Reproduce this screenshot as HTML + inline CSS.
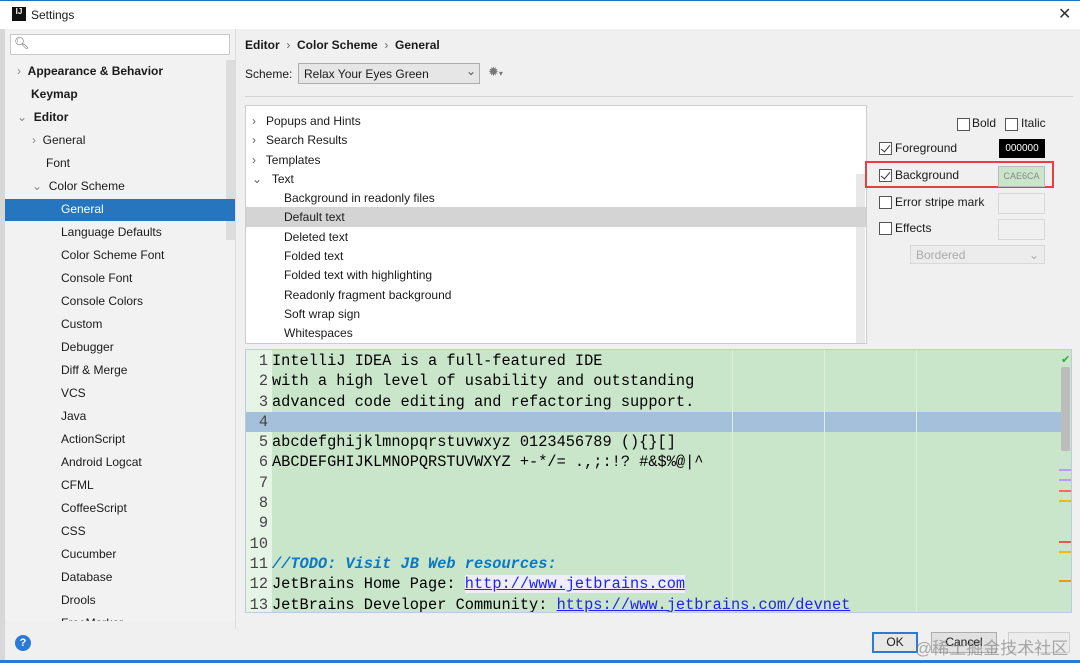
<!DOCTYPE html><html><head><style>
body{margin:0;width:1080px;height:663px;overflow:hidden;background:#f0f0f0;font-family:"Liberation Sans",sans-serif;font-size:12px;color:#1a1a1a;position:relative}
.a{position:absolute;white-space:nowrap}
.mono{font-family:"Liberation Mono",monospace;font-size:15.3px;color:#000}
.n{display:inline-block;width:23px;padding-right:4px;text-align:right;color:#444}
.cb{position:absolute;width:11px;height:11px;border:1px solid #555;background:#fff}
.chk::after{content:"";position:absolute;left:3px;top:0px;width:4px;height:8px;border:solid #333;border-width:0 1.5px 1.5px 0;transform:rotate(40deg)}
</style></head><body>
<div class="a" style="left:0;top:0;width:1080px;height:29px;background:#fff"></div>
<div class="a" style="left:0;top:0;width:1080px;height:1px;background:#1a73c8"></div>
<div class="a" style="left:12px;top:7px;width:14px;height:14px;background:#111;color:#fff;font-size:8px;font-weight:bold;line-height:10px;text-align:center">IJ</div>
<div class="a" style="left:31px;top:8px;font-size:12px">Settings</div>
<div class="a" style="left:1058px;top:4px;font-size:16px;color:#333">✕</div>
<div class="a" style="left:0;top:29px;width:5px;height:634px;background:#d8d8d8"></div>
<div class="a" style="left:5px;top:29px;width:230px;height:600px;background:#f2f2f2"></div>
<div class="a" style="left:235px;top:29px;width:1px;height:600px;background:#dcdcdc"></div>
<div class="a" style="left:10px;top:34px;width:218px;height:19px;background:#fff;border:1px solid #c8c8c8"></div>
<div class="a" style="left:14px;top:36px;font-size:12px;color:#666">🔍︎</div>
<div class="a" style="left:226px;top:60px;width:9px;height:180px;background:#ddd"></div>
<div class="a" style="left:5px;top:199px;width:230px;height:22px;background:#2675bf"></div>
<div class="a" style="left:17px;top:60px;line-height:23px">
<div style="height:23px"><span style="color:#888">›</span>&nbsp; <b>Appearance &amp; Behavior</b></div>
<div style="height:23px;padding-left:14px"><b>Keymap</b></div>
<div style="height:23px"><span style="color:#888">⌄</span>&nbsp; <b>Editor</b></div>
<div style="height:23px;padding-left:15px"><span style="color:#888">›</span>&nbsp; General</div>
<div style="height:23px;padding-left:29px">Font</div>
<div style="height:23px;padding-left:15px"><span style="color:#888">⌄</span>&nbsp; Color Scheme</div>
<div style="height:23px;padding-left:44px;color:#fff">General</div>
<div style="height:23px;padding-left:44px">Language Defaults</div>
<div style="height:23px;padding-left:44px">Color Scheme Font</div>
<div style="height:23px;padding-left:44px">Console Font</div>
<div style="height:23px;padding-left:44px">Console Colors</div>
<div style="height:23px;padding-left:44px">Custom</div>
<div style="height:23px;padding-left:44px">Debugger</div>
<div style="height:23px;padding-left:44px">Diff &amp; Merge</div>
<div style="height:23px;padding-left:44px">VCS</div>
<div style="height:23px;padding-left:44px">Java</div>
<div style="height:23px;padding-left:44px">ActionScript</div>
<div style="height:23px;padding-left:44px">Android Logcat</div>
<div style="height:23px;padding-left:44px">CFML</div>
<div style="height:23px;padding-left:44px">CoffeeScript</div>
<div style="height:23px;padding-left:44px">CSS</div>
<div style="height:23px;padding-left:44px">Cucumber</div>
<div style="height:23px;padding-left:44px">Database</div>
<div style="height:23px;padding-left:44px">Drools</div>
<div style="height:23px;padding-left:44px">FreeMarker</div>
</div>
<div class="a" style="left:5px;top:621px;width:230px;height:42px;background:#f0f0f0"></div>
<div class="a" style="left:15px;top:635px;width:16px;height:16px;border-radius:50%;background:#2b7bd6;color:#fff;font-weight:bold;text-align:center;line-height:16px;font-size:11px">?</div>
<div class="a" style="left:245px;top:38px;font-weight:bold">Editor &nbsp;<span style="font-weight:normal;color:#666">›</span>&nbsp; Color Scheme &nbsp;<span style="font-weight:normal;color:#666">›</span>&nbsp; General</div>
<div class="a" style="left:245px;top:67px">Scheme:</div>
<div class="a" style="left:298px;top:63px;width:180px;height:19px;background:#e6e6e6;border:1px solid #adadad"></div>
<div class="a" style="left:304px;top:67px">Relax Your Eyes Green</div>
<div class="a" style="left:466px;top:64px;color:#555">⌄</div>
<div class="a" style="left:488px;top:64px;color:#777;font-size:13px">✹<span style="font-size:8px">▾</span></div>
<div class="a" style="left:245px;top:96px;width:828px;height:1px;background:#d5d5d5"></div>
<div class="a" style="left:245px;top:105px;width:620px;height:237px;background:#fff;border:1px solid #ccc;overflow:hidden">
<div class="a" style="left:610px;top:68px;width:9px;height:170px;background:#e8e8e8"></div>
<div class="a" style="left:0;top:101px;width:620px;height:20px;background:#d4d4d4"></div>
<div class="a" style="left:6px;top:6px;line-height:19.3px">
<div><span style="color:#666">›</span>&nbsp;&nbsp; Popups and Hints</div>
<div><span style="color:#666">›</span>&nbsp;&nbsp; Search Results</div>
<div><span style="color:#666">›</span>&nbsp;&nbsp; Templates</div>
<div><span style="color:#666">⌄</span>&nbsp;&nbsp; Text</div>
<div style="padding-left:32px">Background in readonly files</div>
<div style="padding-left:32px">Default text</div>
<div style="padding-left:32px">Deleted text</div>
<div style="padding-left:32px">Folded text</div>
<div style="padding-left:32px">Folded text with highlighting</div>
<div style="padding-left:32px">Readonly fragment background</div>
<div style="padding-left:32px">Soft wrap sign</div>
<div style="padding-left:32px">Whitespaces</div>
</div></div>
<div class="cb" style="left:957px;top:118px"></div><div class="a" style="left:972px;top:116px">Bold</div>
<div class="cb" style="left:1005px;top:118px"></div><div class="a" style="left:1021px;top:116px">Italic</div>
<div class="cb chk" style="left:879px;top:142px"></div><div class="a" style="left:895px;top:141px">Foreground</div>
<div class="a" style="left:999px;top:139px;width:46px;height:19px;background:#000;color:#fff;font-size:10px;text-align:center;line-height:19px">000000</div>
<div class="a" style="left:865px;top:161px;width:189px;height:27px;border:2px solid #e84040;box-sizing:border-box"></div>
<div class="cb chk" style="left:879px;top:169px"></div><div class="a" style="left:895px;top:168px">Background</div>
<div class="a" style="left:998px;top:166px;width:45px;height:19px;background:#cae6ca;border:1px solid #bbb;color:#888;font-size:9px;text-align:center;line-height:19px">CAE6CA</div>
<div class="cb" style="left:879px;top:196px"></div><div class="a" style="left:895px;top:195px">Error stripe mark</div>
<div class="a" style="left:998px;top:193px;width:45px;height:19px;border:1px solid #d8d8d8"></div>
<div class="cb" style="left:879px;top:222px"></div><div class="a" style="left:895px;top:221px">Effects</div>
<div class="a" style="left:998px;top:219px;width:45px;height:19px;border:1px solid #d8d8d8"></div>
<div class="a" style="left:910px;top:245px;width:135px;height:19px;border:1px solid #d8d8d8;background:#ececec;color:#aaa;line-height:19px;padding-left:5px;box-sizing:border-box">Bordered<span style="float:right;padding-right:5px">⌄</span></div>
<div class="a" style="left:245px;top:349px;width:827px;height:264px;background:#cae6ca;border:1px solid #bcd;box-sizing:border-box;overflow:hidden">
<div class="a" style="left:0;top:0;width:26px;height:264px;background:#e6f4e6"></div>
<div class="a" style="left:0;top:62px;width:815px;height:20px;background:#a4c0da"></div>
<div class="a" style="left:486px;top:0;width:1px;height:264px;background:#e0eee0"></div>
<div class="a" style="left:578px;top:0;width:1px;height:264px;background:#e0eee0"></div>
<div class="a" style="left:670px;top:0;width:1px;height:264px;background:#e0eee0"></div>
<div class="a" style="left:815px;top:17px;width:9px;height:84px;background:#bcbcbc;border-radius:2px"></div>
<div class="a" style="left:815px;top:3px;color:#3a3;font-size:11px">✔</div>
<div class="a" style="left:813px;top:119px;width:12px;height:2px;background:#b9f"></div>
<div class="a" style="left:813px;top:129px;width:12px;height:2px;background:#b9f"></div>
<div class="a" style="left:813px;top:140px;width:12px;height:2px;background:#f66"></div>
<div class="a" style="left:813px;top:150px;width:12px;height:2px;background:#eb0"></div>
<div class="a" style="left:813px;top:191px;width:12px;height:2px;background:#e55"></div>
<div class="a" style="left:813px;top:201px;width:12px;height:2px;background:#eb0"></div>
<div class="a" style="left:813px;top:230px;width:12px;height:2px;background:#e90"></div>
<div class="a mono" style="left:-1px;top:1px;line-height:20.3px">
<div><span class="n">1</span>IntelliJ IDEA is a full-featured IDE</div>
<div><span class="n">2</span>with a high level of usability and outstanding</div>
<div><span class="n">3</span>advanced code editing and refactoring support.</div>
<div><span class="n">4</span></div>
<div><span class="n">5</span>abcdefghijklmnopqrstuvwxyz 0123456789 (){}[]</div>
<div><span class="n">6</span>ABCDEFGHIJKLMNOPQRSTUVWXYZ +-*/= .,;:!? #&amp;$%@|^</div>
<div><span class="n">7</span></div>
<div><span class="n">8</span></div>
<div><span class="n">9</span></div>
<div><span class="n">10</span></div>
<div><span class="n">11</span><i style="color:#0a78c4;font-weight:bold">//TODO: Visit JB Web resources:</i></div>
<div><span class="n">12</span>JetBrains Home Page: <u style="color:#2222ee;background:#eef">http://www.jetbrains.com</u></div>
<div><span class="n">13</span>JetBrains Developer Community: <u style="color:#2222ee">https://www.jetbrains.com/devnet</u></div>
</div></div>
<div class="a" style="left:872px;top:632px;width:46px;height:21px;border:2px solid #2b7bd6;box-sizing:border-box;background:#e8e8e8;text-align:center;line-height:17px">OK</div>
<div class="a" style="left:931px;top:632px;width:66px;height:21px;border:1px solid #adadad;box-sizing:border-box;background:#e1e1e1;text-align:center;line-height:19px">Cancel</div>
<div class="a" style="left:1008px;top:632px;width:62px;height:21px;border:1px solid #d0d0d0;box-sizing:border-box;background:#ececec"></div>
<div class="a" style="left:915px;top:634px;font-size:17px;color:rgba(120,120,120,.6);font-family:'Liberation Sans','Noto Sans CJK SC',sans-serif">@稀土掘金技术社区</div>
<div class="a" style="left:0;top:660px;width:1080px;height:3px;background:#2b7bd6"></div>
</body></html>
